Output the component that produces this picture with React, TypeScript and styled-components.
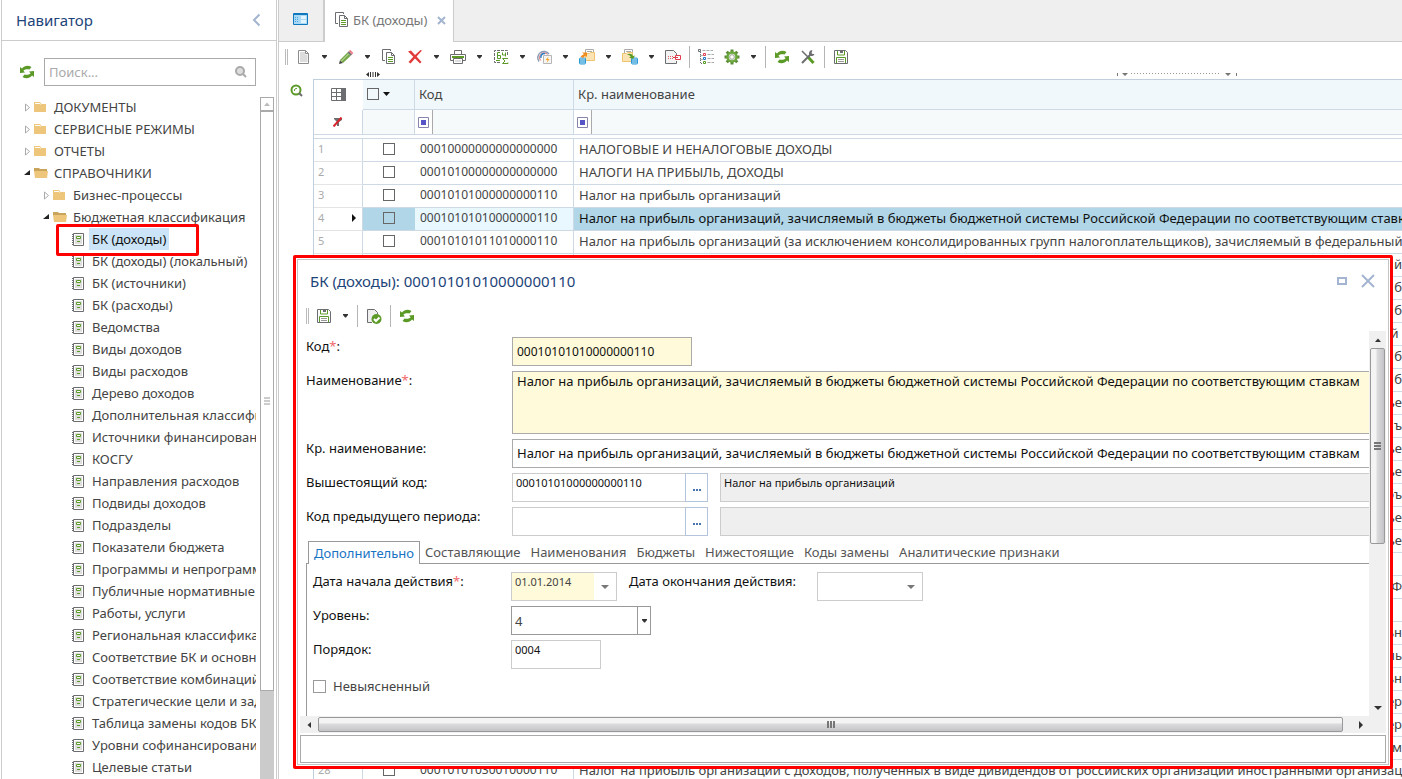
import React from 'react';
import styled, { createGlobalStyle } from 'styled-components';

const GlobalStyle = createGlobalStyle`
  *, *::before, *::after { box-sizing: border-box; }
  html, body { margin: 0; padding: 0; }
  body, button, input, textarea, select {
    font-family: 'Noto Sans', 'Open Sans', sans-serif;
    font-size: 13px;
    color: #444;
  }
  body { background: #fff; overflow: hidden; }
  button { padding: 0; border: 0; background: none; }
  svg { display: block; flex: none; }
`;

/* ---------- icons ---------- */

type Shape = { w?: number; h?: number; children: React.ReactNode };
const Svg = ({ w = 16, h = 16, children }: Shape) => (
  <svg width={w} height={h} viewBox={`0 0 ${w} ${h}`} fill="none" aria-hidden="true">
    {children}
  </svg>
);

const GREEN = '#5c9a28';
const GREY = '#6b6d70';

const Refresh = () => (
  <Svg>
    <path d="M1 3v6l5-.5-1.600-1.700C6 5 8.500 5 10.500 5.500L12.500 3C9 1 5.500 1.500 3 4.400L1 3z" fill={GREEN} />
    <path d="M15 13V7l-5 .500 1.600 1.700C10 11 7.500 11 5.500 10.500L3.500 13c3.500 2 7 1.500 9.500-1.400L15 13z" fill={GREEN} />
  </Svg>
);
const Caret = () => (
  <Svg w={5} h={4}>
    <path d="M0 0h5v1L3 3.500H2L0 1z" fill="#333" />
  </Svg>
);
const NewDoc = () => (
  <Svg>
    <path d="M3.500 1.500h7l3 3v10h-10z" fill="#fff" stroke="#8a8c8e" />
    <path d="M5 3h5v2.500h2.500V13H5z" fill="#dcdcdc" />
    <path d="M10.500 1.500v3h3" stroke="#8a8c8e" />
  </Svg>
);
const Pencil = () => (
  <Svg>
    <path d="M1 15l1-4 3 3z" fill="#444" />
    <path d="M2 11l7.500-7.500 3.200 3.200L5 14z" fill="#74a745" />
    <path d="M3.200 12.300l7.600-7.600" stroke="#d5e6c0" />
    <path d="M9.500 3.500l1.300-1.300L14 5.400l-1.300 1.300z" fill={GREY} />
    <path d="M10.800 2.200l1.400-1.400 3.200 3.200L14 5.400z" fill="#ef7d88" />
  </Svg>
);
const Copy = () => (
  <Svg>
    <path d="M9.500 2V.500h-8v11H4" stroke={GREY} />
    <path d="M5.500 3.500h5l3 3v8h-8z" fill="#fff" stroke={GREY} />
    <path d="M10.500 3.500v3h3" stroke={GREY} />
    <path d="M7 8.500h5M7 10.500h5M7 12.500h5" stroke={GREEN} />
  </Svg>
);
const Delete = () => (
  <Svg>
    <path d="M1 2.500L4 1.500l4 4.500 5.500-5 1.500.500L9.600 7.500l4.900 5.500-1.500 1.500L8 9.600 3.500 14.500l-2-1.500L6.300 7.800z" fill="#e23b3b" />
  </Svg>
);
const Print = () => (
  <Svg>
    <path d="M4.500 5V1.500h7V5" stroke={GREY} />
    <path d="M.500 5.500h15v6H.500z" stroke={GREY} fill="#fff" />
    <path d="M2 8h12" stroke={GREEN} strokeWidth="2" />
    <path d="M3.500 9.500h9v5h-9z" fill="#fff" stroke={GREY} />
    <path d="M5 12h6" stroke="#bbb" />
  </Svg>
);
const Calc = () => (
  <Svg>
    <path d="M14.500 6V1.500h-13v12H8" stroke={GREY} strokeDasharray="3 1" />
    <path d="M7 3.500H4.500v6h3v-3h-3" stroke={GREEN} />
    <path d="M9.500 3.500v2.500h3M12.500 3.500v4" stroke={GREEN} />
    <path d="M15 9.500H9.500L12 12l-2.500 2.500H15v-1M3 11.500h4" stroke={GREEN} />
  </Svg>
);
const Process = () => (
  <Svg>
    <path d="M3 12.500A6 6 0 1 1 13 5" stroke="#8c9cb4" strokeWidth="1.500" />
    <path d="M4.700 11.500A4.200 4.200 0 1 1 11.500 5.500" stroke="#d96b75" />
    <path d="M5 9a3.300 3.300 0 0 1 4-4.300" stroke="#2f7fc4" strokeWidth="1.500" />
    <path d="M7.500 6.500h8v8h-8z" fill="#f5f5f5" stroke="#b7b7b7" />
    <path d="M12.500 7.500L9.500 11h2l-1 3 3.200-4h-2z" fill="#f5a623" />
  </Svg>
);
const Database = ({ x }: { x: number }) => (
  <g>
    <rect x={x} y="9" width="6" height="6" rx="1" fill="#bfe3f7" stroke="#2a9ad6" />
    <path d={`M${x} 11h6M${x} 13h6`} stroke="#2a9ad6" />
  </g>
);
const Import = () => (
  <Svg>
    <path d="M6.500 4V.500h8V4M8 2.500h5" stroke="#aaa" />
    <path d="M6.500 4.500h4l1-1h4v8h-9z" fill="#fbe3b3" stroke="#efc46f" />
    <Database x={0.5} />
    <path d="M1.500 7.500L5 5 3 3.500h5V8L6.500 6.500 4 9z" fill="#f08a1c" />
  </Svg>
);
const Export = () => (
  <Svg>
    <path d="M2.500 4V.500h8V4M4 2.500h5" stroke="#aaa" />
    <path d="M.500 4.500h4l1-1h5v9H.500z" fill="#fbe3b3" stroke="#efc46f" />
    <Database x={9.5} />
    <path d="M5 5.500c3-1.500 5-.500 6 1.500l2-.500-2 3.500-4-1.500 1.800-.800C8 6.500 7 6 5 5.500z" fill={GREEN} />
  </Svg>
);
const DocMinus = () => (
  <Svg>
    <path d="M11.500 6V4.500l-3-3h-8v13h11V12" fill="#f3f3f3" stroke={GREY} />
    <path d="M3 7.500h6M3 9.500h6" stroke="#e0626a" strokeDasharray="1 1" />
    <path d="M10.500 6.500h5v4h-5z" fill="#fff" stroke="#e23b4b" />
    <path d="M8 8.500h5" stroke="#e23b4b" />
  </Svg>
);
const TreeList = () => (
  <Svg>
    <path d="M2.500 3v11.500H5M2.500 6.500H5M2.500 10.500H5" stroke={GREY} strokeDasharray="1 1" />
    <path d="M.500.500h2v2h-2z" stroke={GREY} />
    <path d="M5.500 4.500h2v2h-2z" stroke="#e23b4b" />
    <path d="M5.500 8.500h2v2h-2z" stroke="#2176c4" />
    <path d="M5.500 12.500h2v2h-2z" stroke={GREEN} />
    <path d="M4.500 1.500H15M9.500 5.500H16M9.500 9.500H16M9.500 13.500H16" stroke="#aaa" strokeDasharray="3 1" />
  </Svg>
);
const Gear = () => (
  <Svg>
    <path d="M8 .500v15M.500 8h15M2.700 2.700l10.600 10.600M13.300 2.700L2.700 13.300" stroke="#5c8a3c" strokeWidth="3" />
    <circle cx="8" cy="8" r="4.500" fill="#eee" stroke="#6aa83a" strokeWidth="2.500" />
    <circle cx="8" cy="8" r="2.300" fill="#fff" stroke="#9aa58f" />
  </Svg>
);
const Tools = () => (
  <Svg>
    <path d="M2 2l6.500 6.500" stroke={GREY} strokeWidth="1.500" />
    <path d="M8 8l5.500 6" stroke={GREEN} strokeWidth="3" />
    <path d="M2 14l8.500-8.500" stroke={GREY} strokeWidth="2" />
    <path d="M12.500 1.500a2.800 2.800 0 1 0 2 3.500L12.500 5 11.500 4z" fill={GREY} />
  </Svg>
);
const Save = () => (
  <Svg>
    <path d="M1.500 1.500h11l2 2v11h-13z" fill="#fff" stroke={GREY} />
    <path d="M4.500 2v4h7V2" stroke={GREEN} />
    <path d="M7 1h3v3H7z" fill={GREY} />
    <path d="M3.500 14V8.500h9V14" stroke={GREEN} />
    <path d="M5 10.500h6M5 12.500h6" stroke="#999" />
  </Svg>
);
const DocCheck = () => (
  <Svg>
    <path d="M11.500 6V4.500l-3-3h-7v13H6" fill="#efefef" stroke={GREY} />
    <circle cx="10.500" cy="11" r="5" fill={GREEN} />
    <path d="M8 11l2 2 3.500-3.500" stroke="#fff" strokeWidth="2" />
  </Svg>
);
const WindowIcon = () => (
  <Svg w={15} h={12}>
    <path d="M.500.500h14v11H.500z" fill="#a9d9f5" stroke="#1079bd" />
    <path d="M1 1.500h13" stroke="#1079bd" />
    <path d="M2 4.500h4M2 6.500h4M2 8.500h4" stroke="#4aa5dc" strokeDasharray="1 1" />
    <path d="M8 3h5v3H8zM8 7h5v3H8z" fill="#e4f4fd" />
  </Svg>
);
const GreenSearch = () => (
  <Svg w={13} h={13}>
    <circle cx="6" cy="6" r="4.500" fill="#fff" stroke={GREEN} strokeWidth="2" />
    <path d="M4.500 7A2 2 0 0 1 7 4.500" stroke={GREEN} />
    <path d="M9 9l3 3" stroke={GREY} strokeWidth="2" />
  </Svg>
);
const GreySearch = () => (
  <Svg w={12} h={12}>
    <circle cx="5" cy="5" r="4" fill="#ddd" stroke="#aaa" strokeWidth="2" />
    <path d="M8 8l3 3" stroke="#aaa" strokeWidth="2" />
  </Svg>
);
const ColumnsIcon = () => (
  <Svg w={15} h={13}>
    <path d="M10 0h5v13h-5z" fill={GREY} />
    <path d="M.500.500h14v12H.500zM.500 4.500h10M.500 8.500h10M5.500.500v12" stroke={GREY} />
  </Svg>
);
const NoFilter = () => (
  <Svg w={10} h={10}>
    <path d="M1 1h8v2L6 5v4H4V5L1 2z" fill={GREY} />
    <path d="M.500 9.500l8-9" stroke="#d8232b" strokeWidth="2" />
  </Svg>
);
const FilterKind = () => (
  <Svg w={11} h={11}>
    <path d="M.500.500h10v10H.500z" fill="#fff" stroke="#8686ac" />
    <path d="M3 3h5v5H3z" fill="#5555c8" />
  </Svg>
);
const Folder = ({ open }: { open?: boolean }) => (
  <Svg w={14} h={11}>
    {open ? (
      <>
        <path d="M0 0h5l1 1h7v3H0z" fill="#c9a55c" />
        <path d="M0 3h14l-1 7H1z" fill="#edc57b" />
      </>
    ) : (
      <>
        <path d="M0 0h6l1.500 2H12v8H0z" fill="#edc57b" />
        <path d="M1 1.500h5l.500 1" stroke="#fff" />
      </>
    )}
  </Svg>
);
const Book = () => (
  <Svg w={14} h={14}>
    <path d="M2.500 1.500h10v12h-10z" fill="#fff" stroke={GREY} />
    <path d="M4 3h7v9H4z" fill="#dedede" />
    <path d="M5.500 4.500h4v2h-4z" fill="#fff" stroke={GREEN} />
    <path d="M6 9.500h3" stroke={GREEN} />
    <path d="M1 2.500h1M1 4.500h1M1 6.500h1M1 8.500h1M1 10.500h1M1 12.500h1" stroke={GREY} />
  </Svg>
);
const Expander = ({ open }: { open?: boolean }) => (
  <Svg w={6} h={9}>
    {open ? <path d="M6 1v5H0z" fill="#222" /> : <path d="M1.500 1l4 3.500-4 3.500z" stroke="#aaa" />}
  </Svg>
);
const Triangle = ({ dir, color = '#333' }: { dir: 'up' | 'down' | 'left' | 'right'; color?: string }) => {
  const d = { up: 'M1 6l3-3.500L7 6z', down: 'M0 2l4 4 4-4z', left: 'M6 1L2.500 4 6 7z', right: 'M2 0l4 4-4 4z' }[dir];
  return (
    <Svg w={8} h={8}>
      <path d={d} fill={color} />
    </Svg>
  );
};
const Cross = ({ size, weight }: { size: number; weight: number }) => (
  <Svg w={size} h={size}>
    <path d={`M1 1l${size - 2} ${size - 2}M${size - 1} 1L1 ${size - 1}`} stroke="#a3b5d0" strokeWidth={weight} />
  </Svg>
);

/* ---------- page ---------- */

const Page = styled.div`
  display: flex;
  height: 100vh;
  padding-left: 1px;
  gap: 1px;
  overflow: hidden;
`;

const Navigator = styled.nav`
  flex: none;
  width: 276px;
  display: flex;
  flex-direction: column;
  border: solid #ccc;
  border-width: 0 1px;
`;

const NavHeader = styled.header`
  display: flex;
  align-items: center;
  justify-content: space-between;
  height: 41px;
  padding: 0 15px 0 14px;
  border-bottom: 1px solid #ccc;
`;

const Heading = styled.h2`
  margin: 0;
  font-size: 15px;
  line-height: 20px;
  font-weight: 400;
  color: #1d4479;
`;

const SearchRow = styled.div`
  display: flex;
  align-items: center;
  gap: 9px;
  padding: 17px 20px 10px 17px;
`;

const SearchBox = styled.label`
  flex: 1;
  display: flex;
  align-items: center;
  height: 28px;
  padding: 0 8px 0 4px;
  border: 1px solid #aaa;
`;

const SearchInput = styled.input`
  flex: 1;
  min-width: 0;
  padding: 0;
  border: 0;
  outline: 0;
  &::placeholder { color: #aaa; opacity: 1; }
`;

const TreeArea = styled.div`
  flex: 1;
  min-height: 0;
  display: flex;
  gap: 4px;
  padding-right: 2px;
`;

const Tree = styled.ul`
  flex: 1;
  min-width: 0;
  margin: 0;
  padding: 0;
  list-style: none;
  overflow: hidden;
`;

const TreeItem = styled.li<{ $level: number }>`
  position: relative;
  display: flex;
  align-items: center;
  height: 22px;
  padding-left: ${(p) => [22, 41, 69][p.$level]}px;
  white-space: nowrap;
`;

const ExpandButton = styled.button`
  width: 10px;
`;

const TreeLink = styled.a<{ $selected?: boolean; $book?: boolean }>`
  margin-left: ${(p) => (p.$book ? 4 : 3)}px;
  padding: 0 3px;
  line-height: 22px;
  color: ${(p) => (p.$selected ? '#111' : '#444')};
  background: ${(p) => (p.$selected ? '#cbe4f7' : 'transparent')};
  text-decoration: none;
`;

const Highlight = styled.span`
  position: absolute;
  z-index: 1;
  inset: -4px 57px -6px 54px;
  border: 3px solid #fe0000;
  border-radius: 2px;
  pointer-events: none;
`;

const NavScroll = styled.div`
  width: 14px;
  margin-top: 1px;
  display: flex;
  flex-direction: column;
  background: #cbcbcb;
`;

const NavScrollUp = styled.button`
  display: flex;
  align-items: center;
  justify-content: center;
  height: 14px;
  border: 1px solid #aaa;
  background: #fff;
`;

const NavThumb = styled.div`
  flex: 0 0 85%;
  display: flex;
  flex-direction: column;
  align-items: center;
  justify-content: center;
  gap: 1px;
  border: 1px solid #aaa;
  background: #fff;
  & > i { width: 6px; height: 2px; background: #ccc; }
`;

const Main = styled.main`
  position: relative;
  flex: 1;
  min-width: 0;
  display: flex;
  flex-direction: column;
  border-left: 1px solid #ccc;
`;

const TabBar = styled.div`
  display: flex;
  height: 42px;
  flex: none;
  background: #efefef;
`;

const HomeTab = styled.button`
  display: flex;
  justify-content: center;
  width: 46px;
  padding: 13px 2px 0 0;
  border: solid #ccc;
  border-width: 0 2px 1px 0;
`;

const DocTab = styled.div`
  display: flex;
  align-items: center;
  width: 129px;
  padding: 0 7px 2px 9px;
  background: #fff;
  border-right: 1px solid #ccc;
`;

const DocTabName = styled.button`
  flex: 1;
  display: flex;
  align-items: center;
  gap: 3px;
  color: #777;
  white-space: nowrap;
`;

const TabFill = styled.div`
  flex: 1;
  border-bottom: 1px solid #ccc;
`;

const Toolbar = styled.div`
  display: flex;
  align-items: center;
  height: 30px;
  padding-left: 6px;
  flex: none;
`;

const Grip = styled.span`
  width: 3px;
  height: 16px;
  margin-right: 2px;
  border: solid #bbb;
  border-width: 0 1px;
`;

const IconButton = styled.button`
  display: flex;
  align-items: center;
  justify-content: center;
  width: 26px;
  height: 26px;
`;

const CaretButton = styled(IconButton)`
  width: 17px;
`;

const Separator = styled.span`
  width: 1px;
  height: 22px;
  margin: 0 3px;
  background: #b5b5b5;
`;

const SplitterRow = styled.div`
  display: flex;
  align-items: center;
  justify-content: space-between;
  height: 5px;
  margin-bottom: 2px;
  padding: 0 165px 0 87px;
  flex: none;
`;

const GridArea = styled.div`
  flex: 1;
  min-height: 0;
  display: flex;
`;

const GridSide = styled.div`
  width: 34px;
  flex: none;
  padding: 4px 11px;
`;

const GridClip = styled.div`
  flex: 1;
  min-width: 0;
  overflow: hidden;
  border: solid #c0cfde;
  border-width: 1px 0 0 1px;
`;

const Table = styled.table`
  width: 100%;
  table-layout: fixed;
  border-collapse: separate;
  border-spacing: 0;
`;

const HeadCell = styled.th<{ $plain?: boolean }>`
  height: 30px;
  padding: 0 4px 2px;
  text-align: left;
  font-weight: 400;
  background: ${(p) => (p.$plain ? '#fff' : '#f0f8fc')};
  border: solid #cddae6;
  border-width: 0 ${(p) => (p.$plain ? 0 : 1)}px ${(p) => (p.$plain ? 0 : 1)}px 0;
  &:last-child { border-right: 0; }
`;

const HeadCheck = styled.div`
  display: flex;
  align-items: center;
`;

const FilterCell = styled.td<{ $plain?: boolean }>`
  height: 25px;
  padding: 0;
  background: ${(p) => (p.$plain ? '#fff' : '#f6fafb')};
  border: solid #cddae6;
  border-width: 0 1px 1px 0;
  &:last-child { border-right: 0; }
`;

const FilterBox = styled.button`
  display: flex;
  align-items: center;
  justify-content: center;
  width: 18px;
  height: 24px;
  background: #fff;
  border-right: 1px solid #aaa;
`;

const Centered = styled.div`
  display: flex;
  align-items: center;
  justify-content: center;
`;

const GapCell = styled.td`
  height: 4px;
  padding: 0;
  border-bottom: 1px solid #cddae6;
`;

const Row = styled.tr<{ $selected?: boolean }>`
  color: ${(p) => (p.$selected ? '#111' : '#444')};
  & > td { background: ${(p) => (p.$selected ? '#b0d6e8' : '#fff')}; }
`;

const Cell = styled.td<{ $divider?: boolean }>`
  height: 23px;
  padding: 0 5px;
  line-height: 20px;
  vertical-align: top;
  white-space: nowrap;
  overflow: hidden;
  border: solid #cddae6;
  border-width: 0 ${(p) => (p.$divider ? 1 : 0)}px 1px 0;
`;

const CheckCell = styled(Cell)`
  padding: 0 6px 0 5px;
  & > div { height: 20px; }
`;

const NumberCell = styled(Cell)`
  && { background: #fff; }
  padding: 0 4px;
  font-size: 11px;
  color: #aaa;
  border-bottom-color: #e4e4e4;
  & > div { display: flex; align-items: center; justify-content: space-between; height: 20px; }
`;

const CodeCell = styled(Cell)<{ $selected?: boolean }>`
  && { background: ${(p) => (p.$selected ? '#e9f8ff' : '#fff')}; }
  font-size: 12px;
  color: #444;
`;

const TailCell = styled(Cell)`
  padding: 0;
  text-align: right;
`;

const Check = styled.input.attrs({ type: 'checkbox' })<{ $soft?: boolean }>`
  appearance: none;
  display: block;
  width: ${(p) => (p.$soft ? 13 : 12)}px;
  height: ${(p) => (p.$soft ? 13 : 12)}px;
  margin: 0;
  flex: none;
  border: 1px solid ${(p) => (p.$soft ? '#999' : '#666')};
`;

/* ---------- dialog ---------- */

const DialogFrame = styled.section`
  position: absolute;
  z-index: 2;
  top: 255px;
  right: 9px;
  bottom: 10px;
  left: 14px;
  display: flex;
  padding: 1px;
  border: 3px solid #fe0000;
  border-radius: 2px;
  background: #fff;
`;

const Dialog = styled.div`
  flex: 1;
  min-width: 0;
  display: flex;
  flex-direction: column;
  padding: 0 2px 1px;
  border: 1px solid #c4c4c4;
`;

const DialogHeader = styled.header`
  display: flex;
  align-items: center;
  justify-content: space-between;
  height: 41px;
  padding: 0 11px 0 10px;
`;

const WindowButtons = styled.div`
  display: flex;
  gap: 14px;
  align-items: center;
`;

const MaximizeGlyph = styled.span`
  display: block;
  width: 10px;
  height: 8px;
  border: 2px solid #a3b5d0;
`;

const DialogBody = styled.div`
  flex: 1;
  min-height: 0;
  display: flex;
`;

const Form = styled.form`
  flex: 1;
  min-width: 0;
  display: flex;
  flex-direction: column;
  gap: 5px;
  padding: 6px 0 0 6px;
  overflow: hidden;
`;

const FieldRow = styled.div<{ $label: number }>`
  display: grid;
  grid-template-columns: ${(p) => p.$label}px minmax(0, 1fr);
  align-items: start;
`;

const Label = styled.label`
  line-height: 18px;
  color: #111;
  white-space: nowrap;
  & > i { font-style: normal; color: #f0696c; }
`;

const TextInput = styled.input<{ $width?: number; $required?: boolean; $code?: boolean }>`
  width: ${(p) => (p.$width ? `${p.$width}px` : '100%')};
  height: 29px;
  margin: 0;
  padding: 0 4px 1px;
  border: 1px solid #aaa;
  border-right-width: ${(p) => (p.$width ? 1 : 0)}px;
  outline: 0;
  font-size: ${(p) => (p.$code ? 12 : 13)}px;
  color: #111;
  background: ${(p) => (p.$required ? '#fffad9' : '#fff')};
`;

const SmallInput = styled.input<{ $width: number }>`
  flex: none;
  width: ${(p) => p.$width}px;
  height: 29px;
  margin: 0;
  padding: 0 3px 10px;
  border: 1px solid #ccc;
  outline: 0;
  font-size: 11px;
  color: #111;
  background: #fff;
`;

const Description = styled.input`
  flex: 1;
  min-width: 0;
  height: 29px;
  padding: 0 3px 10px;
  border: 1px solid #ccc;
  border-right: 0;
  outline: 0;
  font-size: 11px;
  color: #111;
  background: #efefef;
`;

const TextArea = styled.textarea`
  display: block;
  width: 100%;
  height: 63px;
  padding: 0 4px;
  border: 1px solid #aaa;
  border-right: 0;
  outline: 0;
  resize: none;
  overflow: hidden;
  line-height: 18px;
  color: #111;
  background: #fffad9;
`;

const Lookup = styled.div`
  display: flex;
`;

const LookupButton = styled.button`
  flex: none;
  display: flex;
  align-items: center;
  justify-content: center;
  gap: 1px;
  width: 23px;
  height: 29px;
  margin: 0 12px 0 -1px;
  padding-top: 4px;
  border: 1px solid #b3c4dc;
  background: #fff;
  & > i { width: 2px; height: 2px; background: #4a74ad; }
`;

const Tabs = styled.div`
  display: flex;
  padding-left: 2px;
  height: 23px;
  border-bottom: 1px solid #999;
`;

const Tab = styled.button<{ $active?: boolean }>`
  height: ${(p) => (p.$active ? 23 : 22)}px;
  padding: 0 5px;
  white-space: nowrap;
  color: ${(p) => (p.$active ? '#1773c4' : '#555')};
  border: solid #999;
  border-width: ${(p) => (p.$active ? '1px 1px 0' : '0')};
  background: #fff;
`;

const TabPanel = styled.div`
  flex: 1;
  display: flex;
  flex-direction: column;
  gap: 5px;
  margin-top: -5px;
  padding: 8px 0 0 6px;
  border-left: 1px solid #999;
`;

const DateRow = styled.div`
  display: flex;
  gap: 12px;
`;

const DateBox = styled.div`
  display: flex;
  width: 106px;
  height: 29px;
  border: 1px solid #ccc;
`;

const DateInput = styled.input<{ $required?: boolean }>`
  width: 82px;
  padding: 0 3px 10px;
  border: 0;
  outline: 0;
  font-size: 11px;
  background: ${(p) => (p.$required ? '#fffad9' : '#fff')};
`;

const DropButton = styled.button`
  flex: 1;
  display: flex;
  align-items: center;
  justify-content: center;
`;

const SecondDate = styled.div`
  display: grid;
  grid-template-columns: 188px auto;
`;

const SelectBox = styled.div`
  display: flex;
  width: 140px;
  height: 29px;
  border: 1px solid #999;
`;

const Select = styled.select`
  appearance: none;
  flex: 1;
  padding: 0 3px;
  border: 0;
  border-right: 1px solid #999;
  outline: 0;
  background: #fff;
`;

const SelectArrow = styled.span`
  width: 12px;
  display: flex;
  align-items: center;
  justify-content: center;
`;

const CheckRow = styled.label`
  display: flex;
  align-items: center;
  gap: 7px;
  height: 24px;
`;

const VScroll = styled.div`
  flex: none;
  width: 17px;
  display: flex;
  flex-direction: column;
  background: #f0f0f0;
`;

const HScroll = styled.div`
  flex: none;
  height: 17px;
  display: flex;
  margin-bottom: 2px;
  padding-right: 17px;
  background: #f0f0f0;
`;

const ScrollArrow = styled.button`
  flex: none;
  display: flex;
  align-items: center;
  justify-content: center;
  width: 17px;
  height: 17px;
`;

const ScrollThumb = styled.div<{ $vertical?: boolean }>`
  flex: ${(p) => (p.$vertical ? '0 1 51%' : '1')};
  display: flex;
  flex-direction: ${(p) => (p.$vertical ? 'column' : 'row')};
  align-items: center;
  justify-content: center;
  gap: 1px;
  margin: ${(p) => (p.$vertical ? '0 1px' : '1px 9px 1px 1px')};
  border: 1px solid #999;
  border-radius: 2px;
  background: linear-gradient(${(p) => (p.$vertical ? '90deg' : '180deg')}, #f4f4f4 0 35%, #dadadc 50%, #c4c4c8);
  & > i {
    width: ${(p) => (p.$vertical ? 7 : 2)}px;
    height: ${(p) => (p.$vertical ? 2 : 7)}px;
    background: #777;
  }
`;

const ScrollSpace = styled.div`
  flex: 1;
`;

const StatusBox = styled.div`
  flex: none;
  height: 28px;
  border: 1px solid #aaa;
`;

/* ---------- data ---------- */

type Node = { label: string; level: number; kind: 'closed' | 'open' | 'book'; selected?: boolean };

const books = [
  'БК (доходы)', 'БК (доходы) (локальный)', 'БК (источники)', 'БК (расходы)', 'Ведомства', 'Виды доходов',
  'Виды расходов', 'Дерево доходов', 'Дополнительная классификация', 'Источники финансирования', 'КОСГУ',
  'Направления расходов', 'Подвиды доходов', 'Подразделы', 'Показатели бюджета', 'Программы и непрограммные',
  'Публичные нормативные обязательства', 'Работы, услуги', 'Региональная классификация',
  'Соответствие БК и основных', 'Соответствие комбинаций', 'Стратегические цели и задачи',
  'Таблица замены кодов БК', 'Уровни софинансирования', 'Целевые статьи',
];

const nodes: Node[] = [
  { label: 'ДОКУМЕНТЫ', level: 0, kind: 'closed' },
  { label: 'СЕРВИСНЫЕ РЕЖИМЫ', level: 0, kind: 'closed' },
  { label: 'ОТЧЕТЫ', level: 0, kind: 'closed' },
  { label: 'СПРАВОЧНИКИ', level: 0, kind: 'open' },
  { label: 'Бизнес-процессы', level: 1, kind: 'closed' },
  { label: 'Бюджетная классификация', level: 1, kind: 'open' },
  ...books.map((label, i): Node => ({ label, level: 2, kind: 'book', selected: i === 0 })),
];

type ToolItem = { icon: React.ReactNode; name: string; menu?: boolean } | 'sep';

const tools: ToolItem[] = [
  { icon: <NewDoc />, name: 'Создать', menu: true },
  { icon: <Pencil />, name: 'Редактировать', menu: true },
  { icon: <Copy />, name: 'Копировать' },
  { icon: <Delete />, name: 'Удалить', menu: true },
  { icon: <Print />, name: 'Печать', menu: true },
  { icon: <Calc />, name: 'Расчет', menu: true },
  { icon: <Process />, name: 'Обработка', menu: true },
  { icon: <Import />, name: 'Импорт', menu: true },
  { icon: <Export />, name: 'Экспорт', menu: true },
  { icon: <DocMinus />, name: 'Исключить' },
  'sep',
  { icon: <TreeList />, name: 'Дерево' },
  { icon: <Gear />, name: 'Настройки', menu: true },
  'sep',
  { icon: <Refresh />, name: 'Обновить' },
  { icon: <Tools />, name: 'Инструменты' },
  'sep',
  { icon: <Save />, name: 'Сохранить' },
];

const dialogTools: ToolItem[] = [
  { icon: <Save />, name: 'Сохранить', menu: true },
  'sep',
  { icon: <DocCheck />, name: 'Проверить' },
  'sep',
  { icon: <Refresh />, name: 'Обновить' },
];

const fullName =
  'Налог на прибыль организаций, зачисляемый в бюджеты бюджетной системы Российской Федерации по соответствующим ставкам';

type Item = { no?: number; code?: string; name?: string; tail?: string };

const items: Item[] = [
  { no: 1, code: '00010000000000000000', name: 'НАЛОГОВЫЕ И НЕНАЛОГОВЫЕ ДОХОДЫ' },
  { no: 2, code: '00010100000000000000', name: 'НАЛОГИ НА ПРИБЫЛЬ, ДОХОДЫ' },
  { no: 3, code: '00010101000000000110', name: 'Налог на прибыль организаций' },
  { no: 4, code: '00010101010000000110', name: fullName },
  {
    no: 5,
    code: '00010101011010000110',
    name: 'Налог на прибыль организаций (за исключением консолидированных групп налогоплательщиков), зачисляемый в федеральный бюджет',
  },
  ...['й', 'б', 'б', 'й\u00a0', 'б', 'б', 'ье', 'ъ', 'ье', 'ъе', 'бъ', 'ье', 'ъе', '', 'Ф', '', 'ьн', 'ль', 'ьн', 'ер', 'ер', 'м'].map(
    (tail) => ({ tail })
  ),
  {
    no: 28,
    code: '00010101030010000110',
    name: 'Налог на прибыль организаций с доходов, полученных в виде дивидендов от российских организации иностранными организациями',
  },
];

const formTabs = ['Дополнительно', 'Составляющие', 'Наименования', 'Бюджеты', 'Нижестоящие', 'Коды замены', 'Аналитические признаки'];

/* ---------- parts ---------- */

const ToolStrip = ({ list }: { list: ToolItem[] }) => (
  <Toolbar>
    <Grip />
    {list.map((t, i) =>
      t === 'sep' ? (
        <Separator key={i} />
      ) : (
        <React.Fragment key={i}>
          <IconButton aria-label={t.name}>{t.icon}</IconButton>
          {t.menu && (
            <CaretButton aria-label={`${t.name}: меню`}>
              <Caret />
            </CaretButton>
          )}
        </React.Fragment>
      )
    )}
  </Toolbar>
);

const SideNavigator = () => (
  <Navigator>
    <NavHeader>
      <Heading>Навигатор</Heading>
      <button aria-label="Свернуть">
        <Svg w={9} h={14}>
          <path d="M7.500 1.500L2 7l5.500 5.500" stroke="#a3b5d0" strokeWidth="2" />
        </Svg>
      </button>
    </NavHeader>
    <SearchRow>
      <button aria-label="Обновить">
        <Refresh />
      </button>
      <SearchBox>
        <SearchInput placeholder="Поиск..." aria-label="Поиск" />
        <GreySearch />
      </SearchBox>
    </SearchRow>
    <TreeArea>
      <Tree>
        {nodes.map((n) => (
          <TreeItem key={n.label} $level={n.level}>
            {n.kind === 'book' ? (
              <Book />
            ) : (
              <>
                <ExpandButton aria-label={n.label}>
                  <Expander open={n.kind === 'open'} />
                </ExpandButton>
                <Folder open={n.kind === 'open'} />
              </>
            )}
            <TreeLink href="#" $book={n.kind === 'book'} $selected={n.selected}>
              {n.label}
            </TreeLink>
            {n.selected && <Highlight />}
          </TreeItem>
        ))}
      </Tree>
      <NavScroll>
        <NavScrollUp aria-label="Вверх">
          <Triangle dir="up" color="#bbb" />
        </NavScrollUp>
        <NavThumb>
          <i />
          <i />
          <i />
        </NavThumb>
      </NavScroll>
    </TreeArea>
  </Navigator>
);

const DataGrid = () => (
  <GridClip>
    <Table>
      <colgroup>
        <col style={{ width: 49 }} />
        <col style={{ width: 52 }} />
        <col style={{ width: 159 }} />
        <col />
      </colgroup>
      <thead>
        <tr>
          <HeadCell $plain aria-label="Столбцы">
            <Centered>
              <ColumnsIcon />
            </Centered>
          </HeadCell>
          <HeadCell>
            <HeadCheck>
              <Check aria-label="Выбрать все" />
              <Svg w={16} h={12}>
                <path d="M4 4h7L7.500 8z" fill="#111" />
              </Svg>
            </HeadCheck>
          </HeadCell>
          <HeadCell>Код</HeadCell>
          <HeadCell>Кр. наименование</HeadCell>
        </tr>
        <tr>
          <FilterCell $plain>
            <Centered>
              <NoFilter />
            </Centered>
          </FilterCell>
          <FilterCell />
          <FilterCell>
            <FilterBox aria-label="Фильтр кода">
              <FilterKind />
            </FilterBox>
          </FilterCell>
          <FilterCell>
            <FilterBox aria-label="Фильтр наименования">
              <FilterKind />
            </FilterBox>
          </FilterCell>
        </tr>
        <tr>
          <GapCell colSpan={4} />
        </tr>
      </thead>
      <tbody>
        {items.map((item, i) => {
          const selected = i === 3;
          return (
            <Row key={i} $selected={selected}>
              <NumberCell $divider>
                <div>
                  {item.no}
                  {selected && <Triangle dir="right" color="#111" />}
                </div>
              </NumberCell>
              <CheckCell>
                <Centered>
                  <Check aria-label={`Строка ${i + 1}`} />
                </Centered>
              </CheckCell>
              <CodeCell $divider $selected={selected}>
                {item.code}
              </CodeCell>
              {item.name ? <Cell>{item.name}</Cell> : <TailCell>{item.tail}</TailCell>}
            </Row>
          );
        })}
      </tbody>
    </Table>
  </GridClip>
);

const LookupField = ({ id, label, code, text }: { id: string; label: string; code?: string; text?: string }) => (
  <FieldRow $label={206}>
    <Label htmlFor={id}>{label}</Label>
    <Lookup>
      <SmallInput id={id} $width={174} defaultValue={code} />
      <LookupButton type="button" aria-label={`${label} выбрать`}>
        <i />
        <i />
        <i />
      </LookupButton>
      <Description readOnly defaultValue={text} aria-label={`${label} описание`} />
    </Lookup>
  </FieldRow>
);

const Editor = () => (
  <DialogFrame>
    <Dialog>
      <DialogHeader>
        <Heading>БК (доходы): 00010101010000000110</Heading>
        <WindowButtons>
          <button aria-label="Развернуть">
            <MaximizeGlyph />
          </button>
          <button aria-label="Закрыть">
            <Cross size={14} weight={2} />
          </button>
        </WindowButtons>
      </DialogHeader>
      <ToolStrip list={dialogTools} />
      <DialogBody>
        <Form>
          <FieldRow $label={206}>
            <Label htmlFor="code">
              Код<i>*</i>:
            </Label>
            <TextInput id="code" $required $code $width={180} defaultValue="00010101010000000110" />
          </FieldRow>
          <FieldRow $label={206}>
            <Label htmlFor="name">
              Наименование<i>*</i>:
            </Label>
            <TextArea id="name" defaultValue={fullName} />
          </FieldRow>
          <FieldRow $label={206}>
            <Label htmlFor="short">Кр. наименование:</Label>
            <TextInput id="short" defaultValue={fullName} />
          </FieldRow>
          <LookupField id="parent" label="Вышестоящий код:" code="00010101000000000110" text="Налог на прибыль организаций" />
          <LookupField id="prev" label="Код предыдущего периода:" />
          <Tabs role="tablist">
            {formTabs.map((t, i) => (
              <Tab key={t} type="button" role="tab" aria-selected={i === 0} $active={i === 0}>
                {t}
              </Tab>
            ))}
          </Tabs>
          <TabPanel>
            <FieldRow $label={198}>
              <Label htmlFor="from">
                Дата начала действия<i>*</i>:
              </Label>
              <DateRow>
                <DateBox>
                  <DateInput id="from" $required defaultValue="01.01.2014" />
                  <DropButton type="button" aria-label="Календарь">
                    <Triangle dir="down" color="#777" />
                  </DropButton>
                </DateBox>
                <SecondDate>
                  <Label htmlFor="to">Дата окончания действия:</Label>
                  <DateBox>
                    <DateInput id="to" />
                    <DropButton type="button" aria-label="Календарь">
                      <Triangle dir="down" color="#777" />
                    </DropButton>
                  </DateBox>
                </SecondDate>
              </DateRow>
            </FieldRow>
            <FieldRow $label={198}>
              <Label htmlFor="level">Уровень:</Label>
              <SelectBox>
                <Select id="level" defaultValue="4">
                  <option>4</option>
                </Select>
                <SelectArrow>
                  <Caret />
                </SelectArrow>
              </SelectBox>
            </FieldRow>
            <FieldRow $label={198}>
              <Label htmlFor="order">Порядок:</Label>
              <SmallInput id="order" $width={90} defaultValue="0004" />
            </FieldRow>
            <CheckRow>
              <Check $soft />
              Невыясненный
            </CheckRow>
          </TabPanel>
        </Form>
        <VScroll>
          <ScrollArrow aria-label="Вверх">
            <Triangle dir="up" />
          </ScrollArrow>
          <ScrollThumb $vertical>
            <i />
            <i />
            <i />
          </ScrollThumb>
          <ScrollSpace />
          <ScrollArrow aria-label="Вниз">
            <Triangle dir="down" />
          </ScrollArrow>
        </VScroll>
      </DialogBody>
      <HScroll>
        <ScrollArrow aria-label="Влево">
          <Triangle dir="left" />
        </ScrollArrow>
        <ScrollThumb>
          <i />
          <i />
          <i />
        </ScrollThumb>
        <ScrollArrow aria-label="Вправо">
          <Triangle dir="right" />
        </ScrollArrow>
      </HScroll>
      <StatusBox />
    </Dialog>
  </DialogFrame>
);

export default function App() {
  return (
    <Page>
      <GlobalStyle />
      <SideNavigator />
      <Main>
        <TabBar>
          <HomeTab aria-label="Рабочий стол">
            <WindowIcon />
          </HomeTab>
          <DocTab>
            <DocTabName>
              <Copy />
              БК (доходы)
            </DocTabName>
            <button aria-label="Закрыть вкладку">
              <Cross size={9} weight={2} />
            </button>
          </DocTab>
          <TabFill />
        </TabBar>
        <ToolStrip list={tools} />
        <SplitterRow>
          <Svg w={14} h={5}>
            <path d="M3 0v5L0 2.500zM11 0v5l3-2.500zM4 0h1v5H4zM6.500 0h1v5h-1zM9 0h1v5H9z" fill="#333" />
          </Svg>
          <Svg w={120} h={5}>
            <path d="M.500 1v3M119.500 1v3" stroke="#777" />
            <path d="M5 1h6L8 4zM108 1h6l-3 3z" fill="#777" />
            <path d="M14 1.500h90" stroke="#999" strokeDasharray="1 2" />
          </Svg>
        </SplitterRow>
        <GridArea>
          <GridSide>
            <button aria-label="Поиск в таблице">
              <GreenSearch />
            </button>
          </GridSide>
          <DataGrid />
        </GridArea>
        <Editor />
      </Main>
    </Page>
  );
}
